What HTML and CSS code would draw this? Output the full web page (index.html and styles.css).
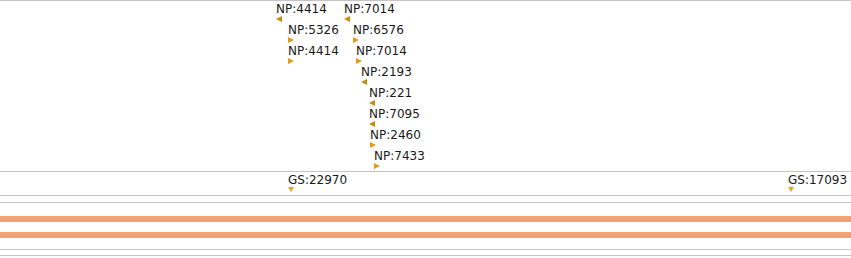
FILE: index.html
```html
<!DOCTYPE html>
<html>
<head>
<meta charset="utf-8">
<link rel="stylesheet" href="styles.css">
</head>
<body>
<div class="view">
  <div class="track track-np">
    <div class="feat" style="left:276px;top:3px"><span class="lbl">NP:4414</span><svg class="mk" width="6" height="6"><polygon class="rev" points="6,0 0,3 6,6"/></svg></div>
    <div class="feat" style="left:344px;top:3px"><span class="lbl">NP:7014</span><svg class="mk" width="6" height="6"><polygon class="rev" points="6,0 0,3 6,6"/></svg></div>
    <div class="feat" style="left:288px;top:24px"><span class="lbl">NP:5326</span><svg class="mk" width="6" height="6"><polygon class="fwd" points="0,0 6,3 0,6"/></svg></div>
    <div class="feat" style="left:353px;top:24px"><span class="lbl">NP:6576</span><svg class="mk" width="6" height="6"><polygon class="fwd" points="0,0 6,3 0,6"/></svg></div>
    <div class="feat" style="left:288px;top:45px"><span class="lbl">NP:4414</span><svg class="mk" width="6" height="6"><polygon class="fwd" points="0,0 6,3 0,6"/></svg></div>
    <div class="feat" style="left:356px;top:45px"><span class="lbl">NP:7014</span><svg class="mk" width="6" height="6"><polygon class="fwd" points="0,0 6,3 0,6"/></svg></div>
    <div class="feat" style="left:361px;top:66px"><span class="lbl">NP:2193</span><svg class="mk" width="6" height="6"><polygon class="rev" points="6,0 0,3 6,6"/></svg></div>
    <div class="feat" style="left:369px;top:87px"><span class="lbl">NP:221</span><svg class="mk" width="6" height="6"><polygon class="rev" points="6,0 0,3 6,6"/></svg></div>
    <div class="feat" style="left:369px;top:108px"><span class="lbl">NP:7095</span><svg class="mk" width="6" height="6"><polygon class="rev" points="6,0 0,3 6,6"/></svg></div>
    <div class="feat" style="left:370px;top:129px"><span class="lbl">NP:2460</span><svg class="mk" width="6" height="6"><polygon class="fwd" points="0,0 6,3 0,6"/></svg></div>
    <div class="feat" style="left:374px;top:150px"><span class="lbl">NP:7433</span><svg class="mk" width="6" height="6"><polygon class="fwd" points="0,0 6,3 0,6"/></svg></div>
  </div>
  <div class="track track-gs">
    <div class="feat" style="left:288px;top:3px"><span class="lbl">GS:22970</span><svg class="mk" width="6" height="6"><polygon class="down" points="0,0 6,0 3,5"/></svg></div>
    <div class="feat" style="left:788px;top:3px"><span class="lbl">GS:17093</span><svg class="mk" width="6" height="6"><polygon class="down" points="0,0 6,0 3,5"/></svg></div>
  </div>
  <div class="track track-gap1"></div>
  <div class="track track-bars">
    <div class="bar"></div>
    <div class="bar"></div>
  </div>
  <div class="track track-end"></div>
  <div class="track track-last"></div>
</div>
</body>
</html>
```

FILE: styles.css
```css
html, body {
  margin: 0;
  padding: 0;
  background: #ffffff;
}
.view {
  width: 851px;
  height: 258px;
  overflow: hidden;
  font-family: "DejaVu Sans", sans-serif;
  font-size: 12px;
  color: #1a1a1a;
}
.track {
  position: relative;
  border-top: 1px solid #c4c4c4;
}
.track-np {
  height: 170px;
}
.track-gs {
  height: 23px;
}
.track-gap1 {
  height: 6px;
}
.track-bars {
  height: 47px;
  display: flex;
  flex-direction: column;
  gap: 10px;
  padding-top: 13px;
  box-sizing: border-box;
}
.bar {
  height: 6px;
  background: #f5a070;
}
.track-end {
  height: 5px;
}
.track-last {
  height: 1px;
}
.feat {
  position: absolute;
  display: flex;
  flex-direction: column;
  align-items: flex-start;
  gap: 2px;
}
.lbl {
  line-height: 10px;
  white-space: nowrap;
}
.mk {
  display: block;
}
.rev {
  fill: #c98b08;
}
.fwd {
  fill: #e29a1b;
}
.down {
  fill: #efa324;
}
```
